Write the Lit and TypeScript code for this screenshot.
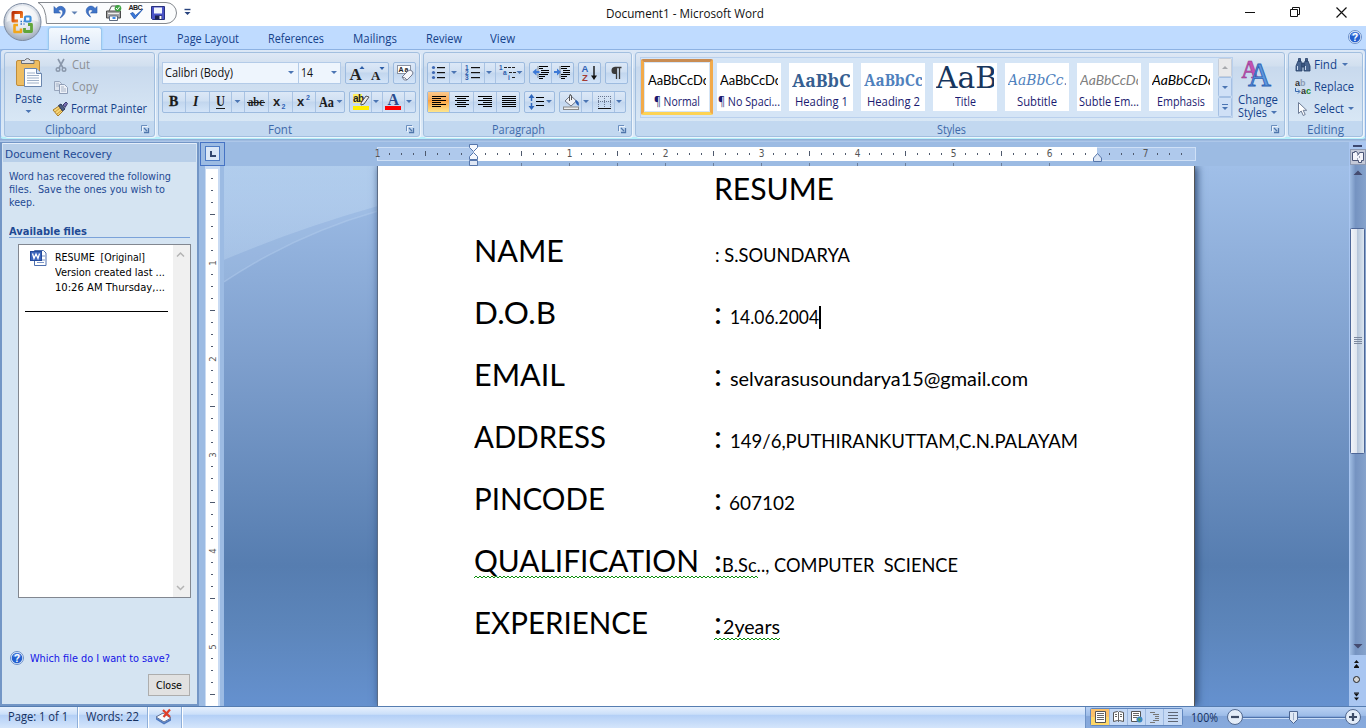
import { LitElement, html, svg, css, nothing } from "lit";
import { customElement, property } from "lit/decorators.js";

/** A run of text condensed or stretched to a given advance width. */
@customElement("fit-text")
class FitText extends LitElement {
  @property({ type: Number }) w = 0;
  @property() text = "";
  static styles = css`
    :host { display: inline-block; white-space: pre; flex: none; }
    span { display: inline-block; transform-origin: 0 50%; }
  `;
  firstUpdated() {
    const s = this.renderRoot.querySelector("span") as HTMLElement;
    const n = s.getBoundingClientRect().width;
    this.style.width = this.w + "px";
    if (n > 0) s.style.transform = `scaleX(${this.w / n})`;
  }
  render() { return html`<span>${this.text}</span>`; }
}

const t = (text: string, w: number, cls = "") => html`<fit-text class=${cls} .text=${text} .w=${w}></fit-text>`;
const ic = (w: number, h: number, body: unknown) => html`<svg width=${w} height=${h} viewBox="0 0 ${w} ${h}">${body}</svg>`;
const tri = (x: number, y: number, c = "#4b75b3") => svg`<path d="M${x - 3} ${y}h6l-3 3z" fill=${c}/>`;
const lines = (x: number, y: number, ws: number[], step = 2, align = "l", max = 14) => ws.map((w, i) =>
  svg`<rect x=${align === "l" ? x : align === "r" ? x + max - w : x + Math.floor((max - w) / 2)} y=${y + i * step} width=${w} height="1" fill="#000"/>`);
const sep = (x: number) => svg`<path d="M${x + .5} 0v20" stroke="#a9c3e3"/>`;

const launcher = ic(9, 9, svg`<path d="M1.5 7V1.5H7" fill="none" stroke="#6b8fbf"/><path d="M4 4l3 3M8.5 4v4.500H4" fill="none" stroke="#4f76ab" stroke-width="1.300"/><path d="M2.500 8V2.500H8" fill="none" stroke="#fff" opacity=".7"/>`);
const help = (s: number) => html`<svg width=${s} height=${s} viewBox="0 0 14 14"><circle cx="7" cy="7" r="6.500" fill="#e9f1fc" stroke="#6a8fc8"/><circle cx="7" cy="7" r="5.300" fill="#2460cf"/><path d="M3 5.500a4.200 4.200 0 0 1 8 0z" fill="#6f9cec"/><text x="7" y="10.800" text-anchor="middle" font-family="Liberation Sans" font-weight="700" font-size="10" fill="#fff">?</text></svg>`;

const orb = html`<svg width="40" height="40" viewBox="0 0 40 40">
  <defs><radialGradient id="o" cx=".5" cy=".35" r=".65"><stop offset="0" stop-color="#fff"/><stop offset=".55" stop-color="#dfe4ec"/><stop offset="1" stop-color="#9ca8ba"/></radialGradient>
  <linearGradient id="or" x1="0" y1="0" x2="1" y2="1"><stop offset="0" stop-color="#b9300a"/><stop offset=".5" stop-color="#df5c14"/><stop offset="1" stop-color="#f8a23c"/></linearGradient></defs>
  <circle cx="20.500" cy="20" r="18.500" fill="url(#o)" stroke="#7c8aa0"/>
  <path d="M4.500 20a16 16 0 0 1 32 0c-8-4-24-4-32 0z" fill="#fff" opacity=".55"/>
  <g fill="none" stroke-linejoin="round">
  <path d="M19.500 16v-5.500h-8.500v8.500h5" stroke="url(#or)" stroke-width="3"/>
  <rect x="23" y="14.500" width="5.500" height="5" rx="1" stroke="#3e8edb" stroke-width="2.200"/>
  <path d="M16 23h-3.500v7h6.500v-3.500" stroke="#f2a61c" stroke-width="2.600"/>
  <path d="M22.500 26v3.500h7v-7h-3.500" stroke="#61a53a" stroke-width="2.800"/></g>
  <path d="M18.500 19.500h1.500M21.500 19.500h1M18.500 22h1.500M21.500 22h1" stroke="#3270c4" stroke-width="1.500"/>
</svg>`;

const qat = html`<svg width="160" height="26" viewBox="0 0 160 26">
  <path d="M1 2.500H129a10.500 10.500 0 0 1 0 21H9.500Q9 6 1 2.500z" fill="#fbfcfd" stroke="#85898f"/>
  <g transform="translate(3 .5)">
  <path d="M14 6v6.500h6.500l-2.300-2.200c3-2.600 6 .2 3.800 4.200l-2 3c6-3 7-9.500 2.500-11.300-2.600-1-5 .2-6.300 2z" fill="#3f74c9" stroke="#2d5ba8" stroke-width=".6"/>
  ${tri(34.500, 11, "#5f80b3")}
  <path d="M57 6v6.500h-6.500l2.300-2.200c-3-2.600-5.500 0-4 3l1.800 3.200c-5-2.500-6-8.500-1.500-10.500 2.600-1 4.500 0 6 2z" fill="#3f74c9" stroke="#2d5ba8" stroke-width=".6"/>
  <g><path d="M68.500 11.500h10v-6h-7z" fill="#fff" stroke="#555"/><path d="M66.500 10.500h14v7h-14z" fill="#a4a4a4" stroke="#4a4a4a"/><path d="M68 13h11" stroke="#eee"/><path d="M69.500 15.500h8v4.500h-8z" fill="#fff" stroke="#5d6a80"/><path d="M72.500 17.500h3" stroke="#3d8bea" stroke-width="2"/><circle cx="78" cy="7.800" r="3.300" fill="#41a343"/><path d="M76 7.500l1.500 1.700 2.200-3" stroke="#fff" fill="none"/></g>
  <text x="88.500" y="9" font-family="Liberation Sans" font-size="7" font-weight="700" fill="#222" textLength="14">ABC</text>
  <path d="M90.500 13l4 5.500 8.500-10-7.500 6.500-2.500-3z" fill="#3a78da" stroke="#2258b0" stroke-width=".8"/>
  <path d="M111.500 6h13v13h-12l-1-1z" fill="#4a53c7" stroke="#27307e"/><path d="M114 7h8v6h-8z" fill="#f2f5fc"/><path d="M115 15h7v4h-7z" fill="#1d2250"/><path d="M119.500 15.500h2v3h-2z" fill="#fff"/>
  <path d="M144.500 9h6" stroke="#28437e" stroke-width="1.400"/>${tri(147.500, 11.500, "#28437e")}</g>
</svg>`;

const pasteIcon = ic(30, 34, svg`<rect x="1.500" y="4.500" width="23" height="25" rx="1.500" fill="#eebd62" stroke="#bf8c3b"/><path d="M6.500 7.500v-3h3q3-4 6 0h3.500v3z" fill="#dcdee2" stroke="#6b6e74"/><path d="M9.500 12.500h12l5 5v13h-17z" fill="#fbfdff" stroke="#6a86ae"/><path d="M21.500 12.500v5h5" fill="#cfdef2" stroke="#6a86ae"/><path d="M12 17h8M12 19.500h12M12 22h12M12 24.500h12M12 27h12" stroke="#9fb0c8"/>`);
const cutIcon = ic(16, 16, svg`<path d="M5 2l5 9M11 2L6 11" stroke="#8a97aa" stroke-width="1.600"/><circle cx="5" cy="12.500" r="1.800" fill="none" stroke="#8a97aa" stroke-width="1.400"/><circle cx="11" cy="12.500" r="1.800" fill="none" stroke="#8a97aa" stroke-width="1.400"/>`);
const copyIcon = ic(16, 16, svg`<path d="M1.500 2.500h5l2 2v7h-7z" fill="#dde4ef" stroke="#98a6bd"/><path d="M6.500 5.500h5l3 3v6h-8z" fill="#edf1f8" stroke="#8f9eb7"/><path d="M3 5h3M3 7h3M8 8h3M8 10h5M8 12h5" stroke="#a8b4c7"/>`);
const brushIcon = ic(15, 16, svg`<path d="M0 9l6-4 4 5-5 5z" fill="#f5d77c" stroke="#a87b26"/><path d="M2 11l5-4M4 13l5-4" stroke="#cf9a34"/><path d="M5.500 4.500L8 3l4 5-2.500 2z" fill="#4d5d83" stroke="#2d3b5c"/><path d="M10 4l3-3L14.500 2.500 12 6.500z" fill="#7a6fb2" stroke="#3b3c70"/>`);

const dropA = (up: boolean) => ic(21, 20, svg`<text x=${up ? 3.5 : 4} y="16.500" font-family="Liberation Serif" font-weight="700" font-size=${up ? 17 : 13} fill="#222">A</text>${up ? svg`<path d="M13.500 6h5L16 3z" fill="#2d5ea8"/>` : svg`<path d="M12.500 4h5L15 7z" fill="#2d5ea8"/>`}`);
const eraser = ic(21, 20, svg`<rect x="3.500" y="2.500" width="13" height="8" fill="#fff" stroke="#8a93a3"/><text x="4.500" y="9" font-family="Liberation Sans" font-weight="700" font-size="7" fill="#222" textLength="10">Aa</text><path d="M8 14l6-6q2-2 4 0t0 4l-5 5q-3 1.500-5-3z" fill="#f6f7fb" stroke="#747c90"/><path d="M8 14q3 0 5 3" stroke="#747c90" fill="none"/>`);

const fontRow = ic(181, 20, svg`
  <g font-family="Liberation Serif" fill="#1b1b1b">
  <text x="6" y="14" font-weight="700" font-size="14" stroke="#1b1b1b" stroke-width=".3">B</text>
  <text x="30" y="14" font-weight="700" font-style="italic" font-size="14">I</text>
  <text x="53" y="13.500" font-size="14" font-weight="700" textLength="9" lengthAdjust="spacingAndGlyphs">U</text><path d="M53 16.500h9" stroke="#1b1b1b"/>
  <text x="85" y="14" font-size="12" font-weight="700" textLength="16" lengthAdjust="spacingAndGlyphs">abc</text><path d="M84 10.500h18" stroke="#1b1b1b"/>
  <text x="156" y="14.500" font-size="14" font-weight="700" textLength="15" lengthAdjust="spacingAndGlyphs">Aa</text></g>
  <g font-family="Liberation Sans" font-weight="700"><text x="110" y="14" font-size="13" fill="#222">x</text><text x="118.500" y="16.500" font-size="7" fill="#2f62b5">2</text><text x="134" y="14" font-size="13" fill="#222">x</text><text x="143" y="8" font-size="7" fill="#2f62b5">2</text></g>
  ${tri(74.500, 8)}${tri(176.500, 8)}${[22, 46, 68, 81, 105, 129, 152].map(sep)}`);
const colourRow = ic(65, 20, svg`<rect x="3" y="2" width="9" height="9" fill="#ffef5f"/><text x="3" y="10" font-family="Liberation Sans" font-weight="700" font-size="10" fill="#222" textLength="11">ab</text><path d="M11 11l5-7 3 1-5 7-3 1z" fill="#e9eaf0" stroke="#555"/><rect x="3" y="14" width="16" height="4" fill="#ffee00"/>${tri(26, 8)}
  <text x="37.500" y="12.500" font-family="Liberation Serif" font-weight="700" font-size="16" fill="#2a4c8f">A</text><rect x="35" y="14" width="16" height="4" fill="#f00"/>${tri(59, 8)}${[21, 32, 54].map(sep)}`);

const lists = ic(96, 20, svg`${[3, 8, 13].map(y => svg`<circle cx="5.500" cy=${y + 1.500} r="1.600" fill="#3f69b4"/><rect x="9" y=${y + 1} width="8" height="1.200" fill="#111"/>`)}${tri(26, 8)}
  ${["1", "2", "3"].map((n, i) => svg`<text x="37" y=${7 + i * 5} font-family="Liberation Sans" font-weight="700" font-size="6.500" fill="#2d5caa">${n}</text><rect x="43" y=${4 + i * 5} width="9" height="1.200" fill="#111"/>`)}${tri(61, 8)}
  <g font-family="Liberation Sans" font-weight="700" font-size="6.500" fill="#2d5caa"><text x="71" y="7">1</text><text x="75" y="12">a</text><text x="80" y="17">i</text></g><path d="M76 4.500h11M81 9.500h7M84 14.500h4" stroke="#222" stroke-dasharray="3 1"/>${tri(91.500, 8)}${[21, 33, 56, 67].map(sep)}`);
const indent = ic(43, 20, svg`${lines(9, 3, [9, 4])}${lines(11, 7, [8, 8])}${lines(9, 11, [9, 6, 4])}<path d="M8 3.500v12" stroke="#333" stroke-dasharray="1 1"/><path d="M2.500 9l4-3.500V8h3v2h-3v2.500z" fill="#3c79d6"/>
  ${lines(31, 3, [9, 6])}${lines(33, 7, [7, 7])}${lines(31, 11, [9, 6, 4])}<path d="M30 3.500v12" stroke="#333" stroke-dasharray="1 1"/><path d="M31 9l-4-3.500V8h-3v2h3v2.500z" fill="#3c79d6"/>${sep(21)}`);
const sort = ic(21, 20, svg`<g font-family="Liberation Sans" font-weight="700" font-size="9.500"><text x="2.500" y="9" fill="#2f62b5">A</text><text x="3" y="17.500" fill="#a33b34">Z</text></g><path d="M15 3v12" stroke="#111" stroke-width="1.400"/><path d="M12 12.500h6L15 17z" fill="#111"/>`);
const pilcrow = ic(21, 20, svg`<g transform="translate(-2 2)"><path d="M10.500 2.500h7M12.500 2v12M15.500 2v12" stroke="#3a3a3a" stroke-width="1.300"/><path d="M12.500 2h-2a3 3.500 0 0 0 0 7h2z" fill="#3a3a3a"/></g>`);
const aligns = ic(91, 20, svg`<defs><linearGradient id="sel" x1="0" y1="0" x2="0" y2="1"><stop offset="0" stop-color="#fbc88c"/><stop offset=".38" stop-color="#f9ae5c"/><stop offset=".4" stop-color="#fb9f3e"/><stop offset="1" stop-color="#fde58c"/></linearGradient></defs><rect width="21.500" height="20" fill="url(#sel)"/>
  ${lines(4, 4, [14, 9, 14, 9, 14, 9])}${lines(27, 4, [14, 9, 14, 9, 14, 9], 2, "c")}${lines(50, 4, [14, 9, 14, 9, 14, 9], 2, "r")}${lines(74, 4, [14, 14, 14, 14, 14, 14])}${[21, 45, 68].map(sep)}`);
const spacing = ic(29, 20, svg`<path d="M6.500 4v12" stroke="#2f67bd" stroke-width="1.500" stroke-dasharray="5 2"/><path d="M3.500 6h6l-3-4zM3.500 14h6l-3 4z" fill="#2f67bd"/>${lines(11, 5, [8, 8, 8], 4)}${tri(24, 8)}`);
const shade = ic(65, 20, svg`<path d="M5 9l5.500-5.500 6 5.500-5.500 5z" fill="#f0f2f7" stroke="#6d7485"/><path d="M9.500 9V3.500q0-2 2 0V8" fill="none" stroke="#555"/><path d="M16 8q4 2 2.500 6-2-1-3.500-5z" fill="#2b5fb4"/><rect x="3.500" y="15" width="15" height="2.500" fill="#eee" stroke="#888"/>${tri(26, 8)}
  <path d="M38.500 4v11M44.500 4v11M50.500 4v11M38 4.500h13M38 9.500h13" stroke="#687690" stroke-dasharray="1 1"/><path d="M38 16.500h13" stroke="#111"/>${tri(59, 8)}${[21, 32, 54].map(sep)}`);

const changeIcon = ic(32, 34, svg`<g font-family="Liberation Serif"><text x="-.5" y="20" font-size="26" font-weight="700" fill="#c252b2" stroke="#8a2f86" stroke-width=".5" textLength="17" lengthAdjust="spacingAndGlyphs">A</text><text x="6" y="28" font-size="34" font-weight="400" fill="#5d97df" stroke="#2c62b4" stroke-width=".9" textLength="23" lengthAdjust="spacingAndGlyphs">A</text></g>`);
const findIcon = ic(16, 16, svg`<g fill="#49658f" stroke="#253c66" stroke-width=".8"><path d="M3 4h3l1 4v6H1V9zM10 4h3l2 5v5H9V8z"/><path d="M3.500 1.500h2v2.500h-2zM10.500 1.500h2v2.500h-2zM7 6h2v4H7z"/></g><path d="M2.500 9v4M10.500 9v4" stroke="#c6d6ec"/>`);
const replaceIcon = ic(16, 16, svg`<g font-family="Liberation Sans" font-weight="700" font-size="9"><text x="0" y="7" fill="#333">a</text><text x="5" y="7" fill="#8b9bb5">b</text><text x="6" y="15" fill="#333">a</text><text x="11" y="15" fill="#1c8c2a">c</text></g><path d="M.5 9v3.500h4M3 10.500l2 2-2 2" fill="none" stroke="#3768ad"/>`);
const selectIcon = ic(16, 16, svg`<path d="M3.500 1.500v11l2.700-2.500 2 4.500 2-1-2-4.200h3.500z" fill="#fff" stroke="#6d7c95"/>`);
const wordIcon = ic(17, 17, svg`<path d="M4.500 .5h9l2.500 2.500v12.500h-11.500z" fill="#fff" stroke="#4e6fae"/><path d="M7 12.500h7M7 10h8M12 6h3" stroke="#7d97c9"/><rect x=".5" y="1.500" width="11" height="9" fill="#3c66bd" stroke="#234a9b"/><path d="M2.500 3.500l1.500 5 2-4.500 2 4.500 1.500-5" stroke="#fff" fill="none" stroke-width="1.300"/>`);

const styles: [string, string, string, number, number][] = [
  ["AaBbCcDc", "body", "¶ Normal", 46, 61],
  ["AaBbCcDc", "body", "¶ No Spaci...", 62, 61],
  ["AaBbCc", "h1", "Heading 1", 53, 68],
  ["AaBbCc", "h2", "Heading 2", 53, 59],
  ["AaBb", "ttl", "Title", 21, 80],
  ["AaBbCc.", "sub", "Subtitle", 40, 60],
  ["AaBbCcDc", "se", "Subtle Em...", 60, 62],
  ["AaBbCcDc", "em", "Emphasis", 48, 62],
];

const fields: [string, number, string, string, number, number][] = [
  ["NAME", 90, "", ": S.SOUNDARYA", 0.5, 135],
  ["D.O.B", 82, ":", "14.06.2004", 16, 89],
  ["EMAIL", 91, ":", "selvarasusoundarya15@gmail.com", 15.5, 298],
  ["ADDRESS", 132, ":", "149/6,PUTHIRANKUTTAM,C.N.PALAYAM", 16, 348],
  ["PINCODE", 131, ":", "607102", 15, 66],
  ["QUALIFICATION", 225, ":", "B.Sc.., COMPUTER  SCIENCE", 7.5, 236],
  ["EXPERIENCE", 174, ":", "2years", 9, 57],
];

function hRuler() {
  const out: unknown[] = [];
  for (let i = -8; i <= 67; i++) {
    const x = 96.5 + i * 12;
    if (i === 0 || x > 812) continue;
    if (i % 8 === 0) out.push(svg`<text x=${x} y="15" text-anchor="middle" font-family="DejaVu Sans Condensed, DejaVu Sans" font-size="10" fill="#555">${Math.abs(i / 8)}</text>`);
    else if (i === 52) continue;
    else if (i % 4 === 0) out.push(svg`<path d="M${x} 9v5" stroke="#4e596d"/>`);
    else out.push(svg`<path d="M${x} 11v2" stroke="#4e596d"/>`);
    if (i > 0 && i < 52 && i % 4 === 0) out.push(svg`<path d="M${x} 21v3" stroke="#6b7f9c"/>`);
  }
  return html`<svg class="hr" width="830" height="24" viewBox="0 0 830 24">
    <rect x=".5" y="5.500" width="818" height="13" fill="#afc9ec" stroke="#cfe0f6"/>
    <rect x="96" y="5" width="624" height="14" fill="#fff"/>
    ${out}
    <path d="M92.500 2.500h8v3l-4 4-4-4zM92.500 17.500v-3l4-4 4 4v3z" fill="#f5f8fd" stroke="#5777ab"/><path d="M92.500 18.500h8v5h-8z" fill="#dfe7f4" stroke="#5777ab"/>
    <path d="M716.500 19.500v-3.500l4-4.500 4 4.500v3.500z" fill="#dce6f5" stroke="#5777ab"/></svg>`;
}
function vRuler() {
  const out: unknown[] = [];
  for (let i = 1; i <= 44; i++) {
    const y = 0.5 + i * 12;
    if (i % 8 === 0) out.push(svg`<text transform="translate(11 ${y + .5}) rotate(-90)" text-anchor="middle" font-family="DejaVu Sans Condensed, DejaVu Sans" font-size="9.500" fill="#555">${i / 8}</text>`);
    else if (i % 4 === 0) out.push(svg`<path d="M5 ${y}h5" stroke="#4e596d"/>`);
    else out.push(svg`<path d="M6 ${y}h2" stroke="#4e596d"/>`);
  }
  return html`<svg width="15" height="540" viewBox="0 0 15 540"><rect width="15" height="540" fill="#c9dbf3"/><rect x="1" y="3" width="12" height="537" fill="#fff"/>${out}</svg>`;
}
const wave = (w: number) => {
  let d = "M0 3";
  for (let x = 2, u = true; x <= w; x += 2, u = !u) d += `L${x} ${u ? 1 : 3}`;
  return html`<svg class="wave" width=${w} height="4" viewBox="0 0 ${w} 4"><path d=${d} fill="none" stroke="#0c8f0c" stroke-width="1"/></svg>`;
};

@customElement("app-root")
class AppRoot extends LitElement {
  static styles = css`
    :host { display: flex; flex-direction: column; width: 1366px; height: 728px; overflow: hidden; background: #9cbbe3; font: 12px/16px "Open Sans", "Noto Sans", sans-serif; color: #15428b; position: relative; }
    * { box-sizing: border-box; }
    svg { display: block; flex: none; overflow: visible; }
    .titlebar { height: 26px; background: #fff; display: flex; flex: none; position: relative; }
    .qat { padding-left: 37px; width: 606px; }
    .title { color: #111; padding-top: 6px; }
    .win { margin-left: auto; }
    .orb { position: absolute; left: 2px; top: 2px; z-index: 3; }
    .tabs { height: 23px; background: #bfdbff; display: flex; flex: none; padding-left: 48px; }
    .tab { height: 23px; padding-top: 5px; flex: none; }
    .tab.on { background: linear-gradient(#f4f9fe, #dfeaf8); border: 1px solid #9cc5ee; border-bottom: none; border-radius: 3px 3px 0 0; width: 54px; margin: 1px 16px -1px 0; padding: 4px 0 0 11px; height: 23px; z-index: 2; box-shadow: 0 0 2px #7fd8f4; }
    .tabs svg { margin: 4px 4px 0 auto; }
    .ribbon { height: 90px; flex: none; border: 1px solid #8db2e3; border-bottom: 2px solid #b5f0fa; border-radius: 4px; background: linear-gradient(#dce8f6, #cfdff1 20%, #c8daee 22%, #dceaf8); display: flex; gap: 3px; padding: 2px 3px 0; }
    .grp { height: 85px; flex: none; border: 1px solid #a2bfdf; border-radius: 3px; background: linear-gradient(#dee8f5 0, #d1dfef 13px, #c8d9ed 14px, #d8e7f5 68px, #c2d8f0 68px); display: flex; flex-direction: column; box-shadow: 1px 1px 0 #eef5fc; }
    .body { height: 68px; display: flex; flex: none; }
    .glab { height: 16px; display: flex; justify-content: center; color: #3e6aaa; position: relative; line-height: 17px; padding-right: 18px; }
    .edit .glab { padding-right: 1px; }
    .glab svg { position: absolute; right: 5px; top: 3px; }
    .clip { width: 151px; } .font { width: 262px; } .para { width: 209px; } .sty { width: 650px; } .edit { width: 75px; }
    .paste { width: 48px; padding: 3px 0 0 10px; display: flex; flex-direction: column; }
    .paste .p { line-height: 14px; margin: 2px 0 1px; }
    .col { display: flex; flex-direction: column; padding-top: 1px; }
    .row { display: flex; align-items: center; height: 22px; gap: 3px; }
    .dim { color: #8c8f94; }
    .tools { flex-direction: column; padding: 9px 0 0 3px; gap: 7px; }
    .tr { display: flex; gap: 4px; height: 22px; }
    .bg { height: 22px; border: 1px solid #9dbbdf; border-radius: 2px; background: linear-gradient(#dce8f7, #cfdff2 45%, #c2d6ee 50%, #d3e4f8); display: flex; }
    .cb { height: 22px; background: #eef5fd; border: 1px solid #b3cbe8; display: flex; align-items: center; color: #111; padding-left: 2px; justify-content: space-between; }
    .c1 { width: 137px; } .c2 { width: 43px; margin-left: -5px; }
    .gal { margin: 4px 0 0 4px; height: 61px; width: 593px; border: 1px solid #b9d0ed; background: #d5e5f6; display: flex; }
    .si { width: 72px; height: 56px; margin-top: 1px; padding: 4px; flex: none; }
    .si.on { padding: 1px; border: 3px solid #f2aa4a; border-top-color: #c98c52; border-bottom-color: #fdd354; border-radius: 2px; }
    .card { width: 64px; height: 48px; background: #fff; display: flex; flex-direction: column; align-items: center; color: #1a1a70; }
    .pv { width: 58px; height: 30px; overflow: hidden; display: flex; align-items: flex-end; flex: none; }
    .card .lab { line-height: 18px; }
    .s-body { font: 13px/26px Lato; color: #000; }
    .s-h1 { font: 700 18px/26px "Noto Serif", "DejaVu Serif Condensed", "Liberation Serif"; color: #365f91; }
    .s-h2 { font: 700 16px/26px "Noto Serif", "DejaVu Serif Condensed", "Liberation Serif"; color: #4f81bd; }
    .s-ttl { font: 29px/29px "DejaVu Serif Condensed", "DejaVu Serif"; color: #17365d; }
    .s-sub { font: italic 14px/26px "DejaVu Serif Condensed", "DejaVu Serif"; color: #4f81bd; }
    .s-se { font: italic 13px/26px Lato; color: #808080; }
    .s-em { font: italic 13px/26px Lato; color: #000; }
    .gs { margin-left: auto; }
    .chg { display: flex; flex-direction: column; padding: 5px 0 0 5px; }
    .chg svg:first-child { margin: 0 0 1px 4px; }
    .chg .l { line-height: 13px; display: flex; align-items: center; gap: 4px; }
    .under { height: 3px; background: linear-gradient(#8aa9d2, #b4cdee); flex: none; }
    .main { height: 564px; display: flex; flex: none; }
    .pane { width: 199px; background: #d5e4f2; border: 2px solid #7396c6; border-top-width: 1px; display: flex; flex-direction: column; flex: none; font: 11px/13px "DejaVu Sans Condensed", "DejaVu Sans", sans-serif; color: #1f4a94; }
    .ph { height: 19px; background: #b8cfe9; border-top: 1px solid #e4eefa; padding: 3px 0 0 2px; margin: 0 1px; line-height: 16px; }
    .pi { padding: 8px 0 0 7px; display: flex; flex-direction: column; height: 62px; }
    .av { margin: 0 7px; height: 14px; border-bottom: 1px solid #7ba2d9; font-weight: 700; line-height: 15px; }
    .list { margin: 6px 0 0 16px; width: 173px; height: 354px; border: 1px solid #828790; display: flex; background: #fff; color: #000; }
    .entry { width: 154px; padding: 5px 0 0 6px; }
    .er { display: flex; gap: 8px; padding-left: 5px; height: 62px; border-bottom: 1px solid #000; width: 143px; }
    .et { display: flex; flex-direction: column; line-height: 15px; }
    .sb { width: 17px; background: #f0f0f0; display: flex; flex-direction: column; justify-content: space-between; }
    .q { display: flex; gap: 6px; margin: 53px 0 0 8px; color: #1414e6; align-items: center; height: 14px; }
    .close { margin: 9px 7px 0 auto; width: 42px; height: 22px; background: #e1e1e1; border: 1px solid #adadad; color: #000; display: flex; justify-content: center; padding-top: 4px; }
    .vr { width: 25px; display: flex; flex-direction: column; margin-left: 1px; flex: none; }
    .corner { height: 24px; border: 1px solid #4673c4; width: 25px; display: flex; flex: none; padding: 3px 0 0 4px; }
    .vr > svg { margin-left: 5px; }
    .ws { width: 1126px; margin-left: -1px; display: flex; flex-direction: column; flex: none; }
    .hr { margin-left: 153px; }
    .canvas { height: 540px; display: flex; background: linear-gradient(#a0bfe8, #7e9fcd 36%, #567db0 74%, #5c85ba 85%, #6591cf); overflow: hidden; }
    .left { width: 153px; }
    .page { width: 818px; background: #fff; border-left: 1px solid #5c6d86; border-right: 1px solid #555; box-shadow: 2px 0 8px #29456f; color: #000; padding-left: 96px; font-family: Lato, sans-serif; }
    .pr { display: flex; height: 62px; line-height: 46px; position: relative; }
    .k { width: 240px; font-size: 31px; line-height: 44px; }
    .v { display: flex; font-size: 18.5px; position: relative; }
    .colon { width: 0; font-size: 31px; line-height: 44px; }
    .val { padding-top: 4px; display: flex; }
    .caret { width: 2px; height: 23px; background: #000; margin-top: 16px; }
    .wave { position: absolute; left: 0; top: 37px; }
    .status { height: 22px; flex: none; border-top: 1px solid #567db1; display: flex; background: linear-gradient(#e6f0fd, #cbdff9 35%, #b3cff6 38%, #d4e5fb); color: #15305f; }
    .cell { display: flex; padding: 2px 0 0 8px; border-right: 1px solid #8eafd9; box-shadow: 1px 0 0 #fff; height: 21px; }
    .zoom { margin-left: auto; width: 281px; border-left: 1px solid #6f93c6; background: linear-gradient(#b8d1f4, #9ebde8 40%, #85a7da 45%, #87aadd); display: flex; }
  `;

  render() {
    return html`
      <div class="titlebar">
        <div class="qat">${qat}</div><div class="title">${t("Document1 - Microsoft Word", 158)}</div>
        <div class="win">${ic(130, 26, svg`<path d="M9 12.500h10" stroke="#111"/><path d="M54.500 9.500h7v7h-7zM56.500 9.500v-2h7v7h-2" fill="none" stroke="#111"/><path d="M100.500 7.500l10 10M110.500 7.500l-10 10" stroke="#111" stroke-width="1.200"/>`)}</div>
        <div class="orb">${orb}</div>
      </div>
      <div class="tabs">
        <div class="tab on">${t("Home", 30)}</div>
        ${([["Insert", 29, 30], ["Page Layout", 62, 29], ["References", 56, 29], ["Mailings", 44, 29], ["Review", 36, 28], ["View", 25, 0]] as [string, number, number][]).map(([s, w, g]) => html`<div class="tab" style="width:${w + g}px">${t(s, w)}</div>`)}
        ${help(14)}
      </div>
      <div class="ribbon">
        <div class="grp clip"><div class="body">
          <div class="paste">${pasteIcon}<div class="p">${t("Paste", 27)}</div>${ic(27, 8, tri(13.5, 3))}</div>
          <div class="col">
            <div class="row dim">${cutIcon}${t("Cut", 18)}</div>
            <div class="row dim">${copyIcon}${t("Copy", 26)}</div>
            <div class="row">${brushIcon}${t("Format Painter", 76)}</div>
          </div></div><div class="glab">${t("Clipboard", 51)}${launcher}</div></div>
        <div class="grp font"><div class="body tools">
          <div class="tr"><div class="cb c1">${t("Calibri (Body)", 68)}${ic(14, 20, tri(7, 8))}</div><div class="cb c2">${t("14", 12)}${ic(14, 20, tri(8, 8))}</div>
            <div class="bg">${dropA(true)}${dropA(false)}</div><div class="bg">${eraser}</div></div>
          <div class="tr"><div class="bg">${fontRow}</div><div class="bg">${colourRow}</div></div>
        </div><div class="glab">${t("Font", 24)}${launcher}</div></div>
        <div class="grp para"><div class="body tools">
          <div class="tr"><div class="bg">${lists}</div><div class="bg">${indent}</div><div class="bg">${sort}</div><div class="bg">${pilcrow}</div></div>
          <div class="tr"><div class="bg">${aligns}</div><div class="bg">${spacing}</div><div class="bg">${shade}</div></div>
        </div><div class="glab">${t("Paragraph", 53)}${launcher}</div></div>
        <div class="grp sty"><div class="body">
          <div class="gal">
            ${styles.map(([p, c, l, lw, pw], i) => html`<div class="si ${i ? "" : "on"}"><div class="card"><div class="pv">${t(p, pw, "s-" + c)}</div><div class="lab">${t(l, lw)}</div></div></div>`)}
            <div class="gs">${ic(14, 59, svg`<rect x=".5" y=".5" width="13" height="18" rx="1" fill="#e9e9ea" stroke="#c5cedb"/><path d="M4 11h6l-3-3z" fill="#a7a9ad"/><rect x=".5" y="19.500" width="13" height="19" rx="1" fill="#cfe0f6" stroke="#a5c0e3"/>${tri(7, 28)}<rect x=".5" y="39.500" width="13" height="19" rx="1" fill="#cfe0f6" stroke="#a5c0e3"/><path d="M4 46.500h6" stroke="#4b75b3"/>${tri(7, 49)}`)}</div>
          </div>
          <div class="chg">${changeIcon}<div class="l">${t("Change", 40)}</div><div class="l">${t("Styles", 29)}${ic(6, 4, tri(3, 0))}</div></div>
        </div><div class="glab">${t("Styles", 29)}${launcher}</div></div>
        <div class="grp edit"><div class="body"><div class="col" style="padding-left:6px">
          <div class="row">${findIcon}${t("Find", 23)}${ic(12, 4, tri(5, 0))}</div>
          <div class="row">${replaceIcon}${t("Replace", 40)}</div>
          <div class="row">${selectIcon}${t("Select", 30)}${ic(8, 4, tri(4, 0))}</div>
        </div></div><div class="glab">${t("Editing", 37)}</div></div>
      </div>
      <div class="under"></div>
      <div class="main">
        <div class="pane">
          <div class="ph">${t("Document Recovery", 107)}</div>
          <div class="pi">${t("Word has recovered the following", 162)}${t("files.  Save the ones you wish to", 156)}${t("keep.", 26)}</div>
          <div class="av">${t("Available files", 78)}</div>
          <div class="list"><div class="entry"><div class="er">${wordIcon}<div class="et">${t("RESUME  [Original]", 90)}${t("Version created last ...", 110)}${t("10:26 AM Thursday,...", 110)}</div></div></div>
            <div class="sb">${ic(15, 18, svg`<path d="M4 11.500l3.500-3.500 3.500 3.500" fill="none" stroke="#b4b4b4" stroke-width="1.500"/>`)}${ic(15, 18, svg`<path d="M4 7l3.500 3.500L11 7" fill="none" stroke="#b4b4b4" stroke-width="1.500"/>`)}</div></div>
          <div class="q">${help(14)}${t("Which file do I want to save?", 140)}</div>
          <div class="close">${t("Close", 26)}</div>
        </div>
        <div class="vr"><div class="corner">${ic(16, 16, svg`<rect x=".5" y=".5" width="14" height="14" fill="#dbe7f7" stroke="#4d7bc4"/><path d="M6 5v5h5" fill="none" stroke="#33476f" stroke-width="2"/>`)}</div>${vRuler()}</div>
        <div class="ws">${hRuler()}
          <div class="canvas">
            <div class="left"><svg width="154" height="540" viewBox="0 0 154 540"><defs><linearGradient id="sw" x1="0" y1="0" x2="0" y2="1"><stop offset="0" stop-color="#bcd6f0" stop-opacity=".6"/><stop offset="1" stop-color="#c8def6" stop-opacity=".38"/></linearGradient></defs><path d="M0 0h154v40Q70 64 0 94z" fill="url(#sw)"/><path d="M0 94Q70 64 154 40v5Q70 69 0 116z" fill="#bad3f2" opacity=".2"/><path d="M0 116Q70 69 154 45" fill="none" stroke="#b9d2f1" opacity=".4" stroke-width="1.500"/></svg></div>
            <div class="page">
              <div class="pr"><div class="k"></div><div class="k">${t("RESUME", 120)}</div></div>
              ${fields.map(([k, kw, c, v, off, vw], i) => html`<div class="pr"><div class="k">${t(k, kw)}</div>
                <div class="v"><div class="colon">${c ? t(":", 8) : nothing}</div><div class="val" style="padding-left:${off}px">${t(v, vw)}</div>${i === 1 ? html`<div class="caret"></div>` : nothing}
                ${i === 6 ? wave(66) : nothing}</div>${i === 5 ? wave(284) : nothing}</div>`)}
            </div>
          </div>
        </div>
        ${ic(16, 564, svg`
          <defs><linearGradient id="tr"><stop offset="0" stop-color="#9fbce2"/><stop offset=".35" stop-color="#7593c1"/><stop offset="1" stop-color="#86a3cc"/></linearGradient><linearGradient id="th"><stop offset="0" stop-color="#f3f5fa"/><stop offset=".45" stop-color="#dfe5ee"/><stop offset=".5" stop-color="#b7c6da"/><stop offset="1" stop-color="#dfe9f2"/></linearGradient></defs>
          <rect x="-1" width="17" height="564" fill="#a9c6f1"/><path d="M3 4h9" stroke="#3c4870" stroke-width="2"/>
          <rect x=".5" y="7.500" width="15" height="15" fill="#c4c9d8" stroke="#8e9ab3"/><path d="M2.500 10.500h2v-1h2l2 3 1-2h4v8h-2v2h-3v-2H2.500z" fill="#f4f4fa" stroke="#4b5678"/><path d="M7 13h1M9 15h1M7 17h1" stroke="#4b5678"/>
          <rect y="23" width="16" height="490" fill="url(#tr)"/><path d="M3.500 33h9L8 28.500zM3.500 502h9L8 506.500z" fill="#454c70"/>
          <rect x=".5" y="86.500" width="14" height="225" rx="1" fill="url(#th)" stroke="#4e6798"/><path d="M4 195.500h8M4 197.500h8M4 199.500h8M4 201.500h8" stroke="#7d899f"/>
          <path d="M4 521h5l-2.500-3zM4 525h5l-2.500-3zM4 551.500h5l-2.500 3zM4 555.500h5l-2.500 3z" fill="#111"/><path d="M4 525.500h5M4 551h5" stroke="#111"/><circle cx="6.500" cy="537.500" r="3" fill="#d4d4d4" stroke="#222"/>`)}
      </div>
      <div class="status">
        <div class="cell" style="width:78px">${t("Page: 1 of 1", 60)}</div><div class="cell" style="width:70px">${t("Words: 22", 53)}</div>
        <div class="cell" style="width:34px;padding:0 0 0 7px">${ic(18, 18, svg`<path d="M1 10l7-4 8 5-7 4z" fill="#f7f9fd" stroke="#5e6e93"/><path d="M1 10.500l8 5 7-4v2l-7 4-8-5z" fill="#4d78bf"/><path d="M8 3l7 7M15 2.500L8.500 10" stroke="#e0402a" stroke-width="2.200"/>`)}</div>
        <div class="zoom">${ic(280, 21, svg`
          <rect x="4.500" y="1.500" width="92" height="17" rx="1" fill="#c5d9f5" stroke="#6187bf"/><rect x="5" y="2" width="18" height="16" fill="#fbc069"/><rect x="5" y="10" width="18" height="8" fill="#fdd768"/><path d="M23.500 2v16M41.500 2v16M59.500 2v16M77.500 2v16" stroke="#9db9e0"/>
          <path d="M9.500 4.500h10v11h-10z" fill="#fff" stroke="#555"/><path d="M11 6.500h7M11 8.500h7M11 10.500h7M11 12.500h7" stroke="#666"/>
          <path d="M27.500 5.500l4-1 1 1 1-1 4 1v9l-4-1-1 1-1-1-4 1z" fill="#fff" stroke="#555"/><path d="M32.500 5v10M29 7.500h2M29 9.500h2M34 7.500h2M34 9.500h2" stroke="#666"/>
          <path d="M45.500 4.500h9v10h-9z" fill="#fff" stroke="#555"/><path d="M47 6.500h6M47 8.500h6M47 10.500h4" stroke="#666"/><circle cx="53.500" cy="12.500" r="3" fill="#3c86c4"/><path d="M52 11l3 1-2 3z" fill="#51a64a"/>
          <path d="M64 5.500h5M67 7.500h6M69 9.500h4M69 11.500h4M67 13.500h6M64 15.500h5" stroke="#777"/><path d="M82 5.500h10M82 8.500h10M82 11.500h10M82 14.500h10" stroke="#5e6675"/>
          <text x="105" y="14.500" font-family="Open Sans" font-size="12" fill="#15305f" textLength="27" lengthAdjust="spacingAndGlyphs">100%</text>
          <path d="M157 10.500h103" stroke="#4f73ab"/><path d="M157 11.500h103" stroke="#c9dcf6"/>
          <circle cx="149" cy="10" r="7.500" fill="#e3ecf8" stroke="#51688f"/><path d="M145 10h8" stroke="#3e4c66" stroke-width="2.200"/>
          <path d="M203.500 4.500h8v8l-4 4-4-4z" fill="#dfe8f5" stroke="#4c6591"/><path d="M207.500 6v7" stroke="#9aabc5"/>
          <circle cx="267" cy="10" r="7.500" fill="#e3ecf8" stroke="#51688f"/><path d="M263 10h8M267 6v8" stroke="#3e4c66" stroke-width="2.200"/>`)}</div>
      </div>`;
  }
}
